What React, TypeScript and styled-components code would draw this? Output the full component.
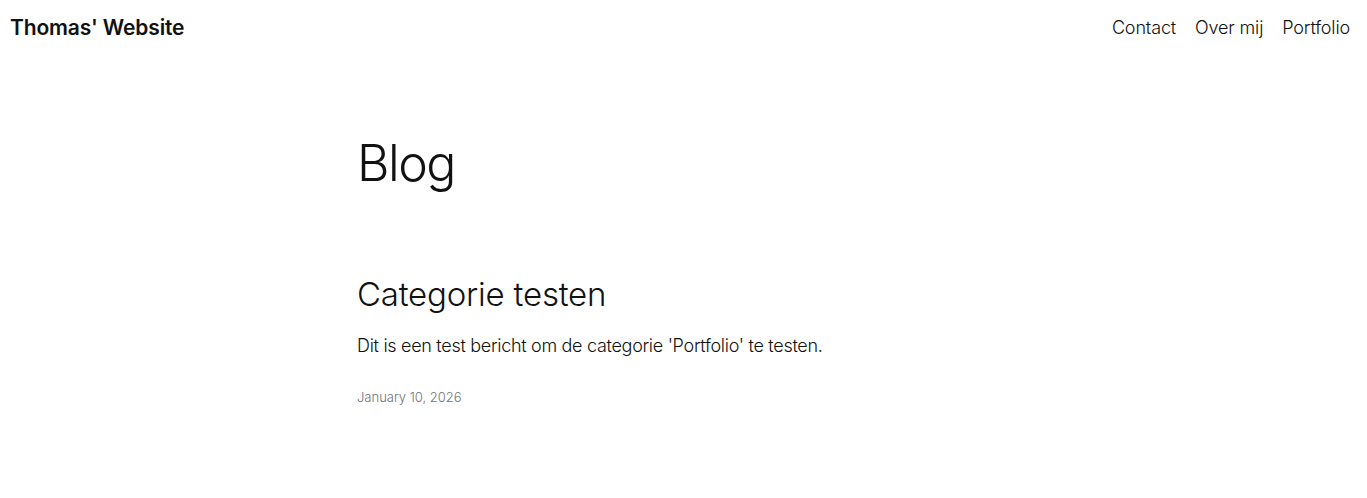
import styled, { createGlobalStyle } from "styled-components";

const GlobalStyle = createGlobalStyle`
    html, body {
        margin: 0;
        padding: 0;
        background: #ffffff;
        color: #111111;
        font-family: Inter, "Noto Sans", sans-serif;
    }
`;

const posts = [
    {
        title: "Categorie testen",
        excerpt: "Dit is een test bericht om de categorie 'Portfolio' te testen.",
        date: "January 10, 2026",
    },
];

const App = () => {
    return (
        <>
            <GlobalStyle />
            <Header>
                <SiteTitle href="#">Thomas' Website</SiteTitle>
                <Nav>
                    <NavLink href="#">Contact</NavLink>
                    <NavLink href="#">Over mij</NavLink>
                    <NavLink href="#">Portfolio</NavLink>
                </Nav>
            </Header>
            <Main>
                <PageTitle>Blog</PageTitle>
                <PostList>
                    {posts.map((post) => (
                        <Post key={post.title}>
                            <PostTitle>{post.title}</PostTitle>
                            <Excerpt>{post.excerpt}</Excerpt>
                            <PostDate>{post.date}</PostDate>
                        </Post>
                    ))}
                </PostList>
            </Main>
        </>
    );
};
export default App;

const Header = styled.header`
    display: flex;
    justify-content: space-between;
    align-items: center;
    height: 55px;
    padding: 0 17px 0 10px;
`;

const SiteTitle = styled.a`
    font-size: 21px;
    font-weight: 600;
    color: #111111;
    text-decoration: none;
    letter-spacing: -0.15px;
`;

const Nav = styled.nav`
    display: flex;
    gap: 19px;
`;

const NavLink = styled.a`
    font-size: 18px;
    font-weight: 300;
    color: #111111;
    text-decoration: none;
    letter-spacing: -0.15px;
`;

const Main = styled.main`
    width: 653px;
    margin: 0 auto;
    padding-top: 78px;
`;

const PageTitle = styled.h1`
    margin: 0;
    font-size: 50px;
    font-weight: 300;
    line-height: 1.2;
    letter-spacing: -1.5px;
`;

const PostList = styled.ul`
    list-style: none;
    margin: 0;
    padding: 82px 0 0;
`;

const Post = styled.li`
    display: flex;
    flex-direction: column;
`;

const PostTitle = styled.h2`
    margin: 0;
    font-size: 33px;
    font-weight: 300;
    line-height: 1.2;
    letter-spacing: -0.2px;
`;

const Excerpt = styled.p`
    margin: 17px 0 0;
    font-size: 18px;
    font-weight: 300;
    line-height: 1.5;
    letter-spacing: -0.3px;
`;

const PostDate = styled.time`
    margin-top: 30px;
    font-size: 13px;
    font-weight: 300;
    color: #71727c;
`;
